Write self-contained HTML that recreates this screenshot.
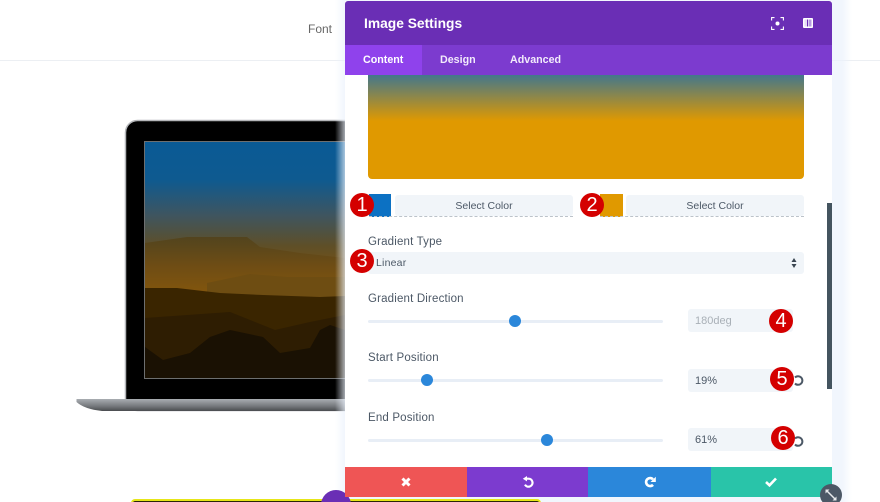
<!DOCTYPE html>
<html>
<head>
<meta charset="utf-8">
<style>
html,body{margin:0;padding:0;background:#fff;}
#p{position:relative;width:880px;height:502px;overflow:hidden;background:#fff;font-family:"Liberation Sans",sans-serif;}
.a{position:absolute;}
.lab{position:absolute;left:368px;font-size:11.5px;letter-spacing:.17px;color:#4c5866;line-height:14px;white-space:nowrap;}
.track{position:absolute;left:368px;width:295px;height:3px;background:#e8eef6;border-radius:2px;}
.knob{position:absolute;width:12px;height:12px;border-radius:50%;background:#2b87da;}
.inp{position:absolute;left:688px;width:105px;height:23px;background:#f1f5f9;border-radius:3px;font-size:11px;line-height:25px;text-indent:7px;color:#4c5866;}
.sel{position:absolute;top:195px;height:21px;background:#f1f5f9;border-radius:3px;font-size:10.5px;line-height:22px;text-align:center;color:#4c5866;}
.dash{position:absolute;top:216px;height:0;border-bottom:1px dashed #bcc3ca;}
.b{position:absolute;width:24px;height:24px;border-radius:50%;background:#d40000;color:#fff;font-family:"Liberation Sans",sans-serif;font-size:20px;line-height:24px;text-align:center;}
.f{position:absolute;top:467px;height:30px;}
.tab{position:absolute;top:53px;font-size:10.7px;font-weight:bold;line-height:14px;color:#f2ebfb;}
</style>
</head>
<body>
<div id="p">
  <div class="a" style="left:0;top:60px;width:880px;height:1px;background:#eceff3;"></div>
  <div class="a" style="left:308px;top:22px;font-size:12px;color:#666;line-height:14px;">Font</div>

  <!-- laptop -->
  <svg class="a" style="left:60px;top:100px;" width="300" height="330" viewBox="0 0 300 330">
    <defs>
      <linearGradient id="sky" x1="0" y1="0" x2="0" y2="1">
        <stop offset="0" stop-color="#0a5a95"/>
        <stop offset=".16" stop-color="#0e5a90"/>
        <stop offset=".31" stop-color="#3e5560"/>
        <stop offset=".44" stop-color="#5e4f28"/>
        <stop offset=".55" stop-color="#7a5212"/>
        <stop offset=".65" stop-color="#8f5b0a"/>
        <stop offset="1" stop-color="#8f5b0a"/>
      </linearGradient>
      <linearGradient id="hill" x1="0" y1="0" x2="0" y2="1">
        <stop offset="0" stop-color="#52441e"/>
        <stop offset=".5" stop-color="#6f4d14"/>
        <stop offset="1" stop-color="#85570c"/>
      </linearGradient>
      <linearGradient id="base" x1="0" y1="0" x2="0" y2="1">
        <stop offset="0" stop-color="#a9adb2"/>
        <stop offset=".6" stop-color="#75787c"/>
        <stop offset="1" stop-color="#4a4c4f"/>
      </linearGradient>
    </defs>
    <rect x="65.500" y="20.500" width="240" height="290" rx="12" fill="#000" stroke="#b4b6b9" stroke-width="1.500"/>
    <rect x="84.500" y="41.500" width="221" height="237" fill="url(#sky)" stroke="#6d6f70" stroke-width="1"/>
    <path d="M85 143L127 137L187 137L200 147L240 153L285 158V197H85Z" fill="url(#hill)"/>
    <path d="M147 183L190 174L227 177L285 177V197H147Z" fill="#6e4d12"/>
    <path d="M85 188L117 188L160 193L203 195L260 197L285 196V278H85Z" fill="#3a2500"/>
    <path d="M85 218L170 212L215 230L250 222L285 215V278H85Z" fill="#2e1d02"/>
    <path d="M85 247L103 260L130 253L150 237L170 230L203 237L220 253L250 248L260 230L270 225L285 230V278H85Z" fill="#1a1103"/>
    <path d="M16.500 299H304V311H42Q24 309 16.500 302Z" fill="url(#base)"/>
  </svg>

  <!-- modal shadow -->
  <div class="a" style="left:335px;top:0;width:517px;height:502px;background:linear-gradient(90deg,rgba(235,242,252,0) 0,rgba(235,242,252,.7) 10px,rgba(235,242,252,.7) 507px,rgba(235,242,252,0) 517px);"></div>
  <div class="a" style="left:345px;top:1px;width:487px;height:496px;background:#fff;"></div>

  <!-- bottom element -->
  <div class="a" style="left:131px;top:499px;width:410px;height:8px;background:#2a2508;border:2px solid #e6e619;border-radius:8px;box-sizing:border-box;"></div>
  <div class="a" style="left:321px;top:490px;width:30px;height:30px;border-radius:50%;background:#6a2eb5;"></div>

  <!-- header -->
  <div class="a" style="left:345px;top:1px;width:487px;height:44px;background:#6a2eb5;border-radius:3px 3px 0 0;"></div>
  <div class="a" style="left:364px;top:15px;font-size:13.8px;font-weight:bold;color:#fff;line-height:17px;">Image Settings</div>
  <svg class="a" style="left:771px;top:17px;" width="13" height="13" viewBox="0 0 13 13" fill="none" stroke="#fff" stroke-width="1.100">
    <path d="M.6 3.500V.6H3.500M9.500 .6H12.400V3.500M12.400 9.500V12.400H9.500M3.500 12.400H.6V9.500"/>
    <circle cx="6.500" cy="6.500" r="2" fill="#fff" stroke="none"/>
  </svg>
  <svg class="a" style="left:803px;top:18px;" width="10" height="10" viewBox="0 0 10 10">
    <rect width="10" height="10" rx="1" fill="#fff"/>
    <rect x="4" y="1.500" width="1" height="7" fill="#6a2eb5"/>
    <rect x="5.500" y="1.500" width="3" height="7" fill="#b79ae0"/>
    <rect x="1.500" y="1.500" width="2.500" height="7" fill="#e6dbf5"/>
  </svg>

  <!-- tabs -->
  <div class="a" style="left:345px;top:45px;width:487px;height:30px;background:#7c3bcf;"></div>
  <div class="a" style="left:345px;top:45px;width:77px;height:30px;background:#8f42ec;"></div>
  <div class="tab" style="left:363px;color:#fff;">Content</div>
  <div class="tab" style="left:440px;">Design</div>
  <div class="tab" style="left:510px;">Advanced</div>

  <!-- preview -->
  <div class="a" style="left:368px;top:75px;width:436px;height:104px;border-radius:0 0 4px 4px;background:linear-gradient(180deg,#43778c 0,#e09900 46px,#e09900 104px);"></div>

  <!-- colors -->
  <div class="a" style="left:369px;top:194px;width:22px;height:23px;background:#0c71c3;"></div>
  <div class="sel" style="left:395px;width:178px;">Select Color</div>
  <div class="dash" style="left:369px;width:204px;"></div>
  <div class="a" style="left:600px;top:194px;width:23px;height:23px;background:#e09900;"></div>
  <div class="sel" style="left:626px;width:178px;">Select Color</div>
  <div class="dash" style="left:600px;width:204px;"></div>

  <!-- gradient type -->
  <div class="lab" style="top:235px;">Gradient Type</div>
  <div class="a" style="left:368px;top:252px;width:436px;height:22px;background:#f1f5f9;border-radius:3px;font-size:10.5px;line-height:23px;text-indent:8px;color:#4c5866;letter-spacing:.2px;">Linear</div>
  <svg class="a" style="left:791px;top:258px;" width="6" height="10" viewBox="0 0 6 10" fill="#3a4550"><path d="M3 0L5.500 4H.5ZM3 10L.5 6H5.500Z"/></svg>

  <!-- sliders -->
  <div class="lab" style="top:292px;">Gradient Direction</div>
  <div class="track" style="top:320px;"></div>
  <div class="knob" style="left:509px;top:315px;"></div>
  <div class="inp" style="top:309px;color:#a9b0b7;">180deg</div>

  <div class="lab" style="top:351px;">Start Position</div>
  <div class="track" style="top:379px;"></div>
  <div class="knob" style="left:421px;top:374px;"></div>
  <div class="inp" style="top:369px;">19%</div>

  <div class="lab" style="top:411px;">End Position</div>
  <div class="track" style="top:439px;"></div>
  <div class="knob" style="left:541px;top:434px;"></div>
  <div class="inp" style="top:428px;">61%</div>

  <!-- reset icons -->
  <svg class="a" style="left:792px;top:374px;" width="13" height="13" viewBox="0 0 13 13" fill="none" stroke="#4c5866" stroke-width="2"><path d="M3 3.500A4.300 4.300 0 1 1 3 9.500"/></svg>
  <svg class="a" style="left:792px;top:435px;" width="13" height="13" viewBox="0 0 13 13" fill="none" stroke="#4c5866" stroke-width="2"><path d="M3 3.500A4.300 4.300 0 1 1 3 9.500"/></svg>

  <!-- scrollbar -->
  <div class="a" style="left:827px;top:203px;width:5px;height:186px;background:#44545f;"></div>

  <!-- footer -->
  <div class="f" style="left:345px;width:122px;background:#ef5555;"></div>
  <div class="f" style="left:467px;width:121px;background:#7c3bcf;"></div>
  <div class="f" style="left:588px;width:123px;background:#2b87da;"></div>
  <div class="f" style="left:711px;width:121px;background:#29c4a9;"></div>
  <svg class="a" style="left:401px;top:477px;" width="10" height="10" viewBox="0 0 10 10" stroke="#fff" stroke-width="3"><path d="M1.500 1.500L8.500 8.500M8.500 1.500L1.500 8.500"/></svg>
  <svg class="a" style="left:522px;top:476px;" width="12" height="12" viewBox="0 0 12 12" fill="none" stroke="#fff" stroke-width="2.200"><path d="M4.500 2.700H6.500A4 4 0 1 1 3 8.600"/><path d="M5 0L.8 2.700L5 5.400Z" fill="#fff" stroke="none"/></svg>
  <svg class="a" style="left:644px;top:476px;" width="12" height="12" viewBox="0 0 12 12" fill="none" stroke="#fff" stroke-width="2.600"><path d="M9 3.300A4 4 0 1 0 9 8.800"/><path d="M11.800 .8V6H6.500Z" fill="#fff" stroke="none"/></svg>
  <svg class="a" style="left:765px;top:477px;" width="12" height="10" viewBox="0 0 12 10" fill="none" stroke="#fff" stroke-width="2.600"><path d="M1 5L4.500 8.300L11 1.500"/></svg>

  <!-- resize -->
  <div class="a" style="left:820px;top:484px;width:22px;height:22px;border-radius:50%;background:#4c5866;"></div>
  <svg class="a" style="left:825px;top:489px;" width="12" height="12" viewBox="0 0 12 12" stroke="#e8eaec" stroke-width="1.500" fill="#e8eaec"><path d="M2 2L10 10"/><path d="M.5 .5H4.500L.5 4.500ZM11.500 11.500H7.500L11.500 7.500Z" stroke="none"/></svg>

  <!-- badges -->
  <div class="b" style="left:350px;top:193px;">1</div>
  <div class="b" style="left:580px;top:193px;">2</div>
  <div class="b" style="left:350px;top:249px;">3</div>
  <div class="b" style="left:769px;top:309px;">4</div>
  <div class="b" style="left:770px;top:367px;">5</div>
  <div class="b" style="left:771px;top:426px;">6</div>
</div>
</body>
</html>
